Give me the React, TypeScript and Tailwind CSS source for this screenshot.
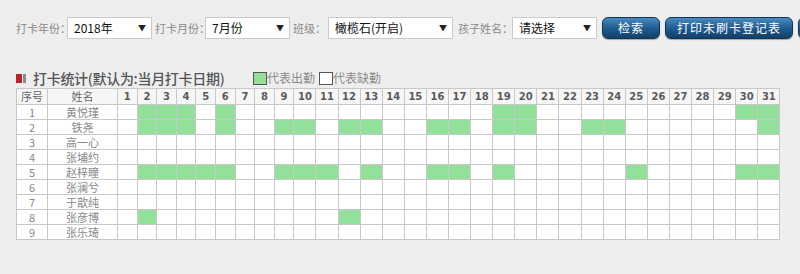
import React from 'react';

interface Student {
  id: number;
  name: string;
  days: number[];
}

const students: Student[] = [
  { id: 1, name: '黄悦瑾', days: [2, 3, 4, 6, 19, 20, 30, 31] },
  { id: 2, name: '铁尧', days: [2, 3, 4, 6, 9, 10, 12, 13, 16, 17, 19, 20, 23, 24, 31] },
  { id: 3, name: '高一心', days: [] },
  { id: 4, name: '张埔约', days: [] },
  { id: 5, name: '赵梓瞳', days: [2, 3, 4, 5, 6, 9, 10, 11, 13, 16, 17, 19, 25, 30, 31] },
  { id: 6, name: '张澜兮', days: [] },
  { id: 7, name: '于歆纯', days: [] },
  { id: 8, name: '张彦博', days: [2, 12] },
  { id: 9, name: '张乐琦', days: [] },
];

const dayList = Array.from({ length: 31 }, (_, i) => i + 1);

const cjk = "font-['Noto_Sans_CJK_SC','Noto_Sans',sans-serif]";

function FakeSelect({ value, width }: { value: string; width: string }) {
  return (
    <div
      className={`${width} h-[22px] shrink-0 flex items-center justify-between bg-white border border-[#c9c9c9] pl-[6px] pr-[5px] text-[12px] text-[#111] leading-none`}
    >
      <span>{value}</span>
      <span className="text-[8px] text-[#222]">▼</span>
    </div>
  );
}

function BlueButton({ label, width }: { label?: string; width: string }) {
  return (
    <button
      className={`${width} h-[22px] shrink-0 ml-[5px] rounded-[6px] border border-[#103657] bg-linear-to-b from-[#4a8ac0] via-[#1f5d92] to-[#143f66] text-white text-[12px] leading-none tracking-[1px] shadow-[0_1px_1px_rgba(0,0,0,0.3)]`}
    >
      {label}
    </button>
  );
}

export default function App() {
  return (
    <div className={`w-[800px] h-[274px] overflow-hidden bg-[#eeeeee] ${cjk}`}>
      {/* Filter bar */}
      <div className="flex items-center pl-4 pt-[17px] whitespace-nowrap">
        <span className="w-[51px] shrink-0 text-[11px] text-[#8a8a8a]">打卡年份：</span>
        <FakeSelect value="2018年" width="w-[85px]" />
        <span className="w-[53px] shrink-0 pl-[3px] text-[11px] text-[#8a8a8a]">打卡月份：</span>
        <FakeSelect value="7月份" width="w-[85px]" />
        <span className="w-[38px] shrink-0 pl-[3px] text-[11px] text-[#8a8a8a]">班级：</span>
        <FakeSelect value="橄榄石(开启)" width="w-[125px]" />
        <span className="w-[59px] shrink-0 pl-[5px] text-[11px] text-[#8a8a8a]">孩子姓名：</span>
        <FakeSelect value="请选择" width="w-[85px]" />
        <BlueButton label="检索" width="w-[58px]" />
        <BlueButton label="打印未刷卡登记表" width="w-[128px]" />
        {/* next button only peeks in at the right edge */}
        <BlueButton width="w-[60px]" />
      </div>

      {/* Title + legend */}
      <div className="flex items-center h-[20px] mt-[29px] pl-4">
        <span className="w-[6px] h-[9px] bg-[#b8232a]" />
        <span className="w-[3px] h-[9px] ml-[1px] bg-[#8c8c8c]" />
        <span className="ml-[7px] w-[214px] text-[14px] font-medium text-[#555] leading-none whitespace-nowrap tracking-[-0.3px]">
          打卡统计(默认为:当月打卡日期)
        </span>
        <span className="ml-[6px] w-[14px] h-[13px] bg-[#92e09a] border border-[#555]" />
        <span className="text-[12px] text-[#8a8a8a] leading-none">代表出勤</span>
        <span className="ml-[4px] w-[14px] h-[13px] bg-white border border-[#555]" />
        <span className="text-[12px] text-[#8a8a8a] leading-none">代表缺勤</span>
      </div>

      {/* Attendance table */}
      <table className="ml-4 w-[764px] table-fixed border-collapse">
        <colgroup>
          <col className="w-[31px]" />
          <col className="w-[70px]" />
          {dayList.map((d) => (
            <col key={d} className={d < 10 ? 'w-[19.6px]' : 'w-[22.1px]'} />
          ))}
        </colgroup>
        <thead>
          <tr className="h-[16px] bg-[#f6f6f6]">
            <th className="border border-[#c8c8c8] p-0 text-[11px] font-normal text-[#666] leading-none">序号</th>
            <th className="border border-[#c8c8c8] p-0 text-[11px] font-normal text-[#666] leading-none">姓名</th>
            {dayList.map((d) => (
              <th
                key={d}
                className="border border-[#c8c8c8] p-0 text-[10px] font-bold text-[#5a5a5a] leading-none font-['DejaVu_Sans',sans-serif]"
              >
                {d}
              </th>
            ))}
          </tr>
        </thead>
        <tbody>
          {students.map((s) => (
            <tr key={s.id} className="h-[15px] bg-white">
              <td className="border border-[#c8c8c8] p-0 text-center text-[11px] text-[#888] leading-none">{s.id}</td>
              <td className="border border-[#c8c8c8] p-0 text-center text-[11px] text-[#888] leading-none">{s.name}</td>
              {dayList.map((d) => (
                <td
                  key={d}
                  className={`border border-[#c8c8c8] p-0 ${s.days.includes(d) ? 'bg-[#92e09a]' : 'bg-white'}`}
                />
              ))}
            </tr>
          ))}
        </tbody>
      </table>
    </div>
  );
}
